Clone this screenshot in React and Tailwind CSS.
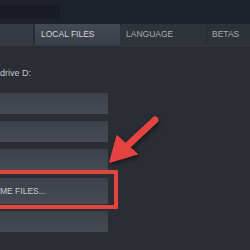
import React from "react";

const buttons = [
  { id: 1, label: "" },
  { id: 2, label: "" },
  { id: 3, label: "" },
  { id: 4, label: "ME FILES...", big: true },
  { id: 5, label: "" },
];

const App = () => {
  return (
    <div className="relative w-[250px] h-[250px] overflow-hidden bg-[#2a2d33] font-['Liberation_Sans',Arial,sans-serif]">
      {/* Top band */}
      <div className="h-[24px] bg-[#1d212a] pt-[5px]">
        <div className="w-[60px] h-[13px] bg-[#181b23]" />
      </div>

      {/* Tabs */}
      <div className="flex h-[21px] text-[8.5px] leading-none">
        <div className="w-[33px] bg-[#363a42] mr-[2px]" />
        <div className="w-[85px] bg-gradient-to-b from-[#444a54] to-[#3a3f48] text-[#d2d6dc] flex items-center pl-[6px]">
          LOCAL FILES
        </div>
        <div className="w-[87px] bg-[#2f333a] text-[#a7acb4] flex items-center pl-[6px] border-r border-[#272a30]">
          LANGUAGE
        </div>
        <div className="flex-1 bg-[#2e3239] text-[#a7acb4] flex items-center pl-[5px]">
          BETAS
        </div>
      </div>
      <div className="h-[1px] bg-[#373b42]" />

      {/* Content */}
      <div className="pt-[23px] text-[9px] leading-none text-[#c3c7cd]">drive D:</div>

      <div className="flex flex-col gap-[7px] mt-[15px]">
        {buttons.map((b) => (
          <div
            key={b.id}
            className={`w-[108px] ${b.big ? "h-[26px] mt-[1px]" : "h-[21px]"} bg-gradient-to-b from-[#3d4149] to-[#464a53] overflow-hidden flex items-center`}
          >
            {b.label && (
              <span className="text-[8.5px] leading-none text-[#c9cdd3] whitespace-nowrap">
                {b.label}
              </span>
            )}
          </div>
        ))}
      </div>

      {/* Highlight box */}
      <div className="absolute left-[-6px] top-[170px] w-[124px] h-[39px] border-4 border-[#e2443f] rounded-[1px]" />

      {/* Arrow */}
      <svg
        className="absolute left-0 top-0 drop-shadow-[1px_2px_2px_rgba(0,0,0,0.5)]"
        width="250"
        height="250"
        viewBox="0 0 250 250"
      >
        <line x1="155" y1="120" x2="126" y2="147" stroke="#e5433f" strokeWidth="7" strokeLinecap="round" />
        <polygon
          points="110,162 117,136 137,154"
          fill="#e5433f"
          stroke="#e5433f"
          strokeWidth="1.5"
          strokeLinejoin="round"
        />
      </svg>
    </div>
  );
};

export default App;
